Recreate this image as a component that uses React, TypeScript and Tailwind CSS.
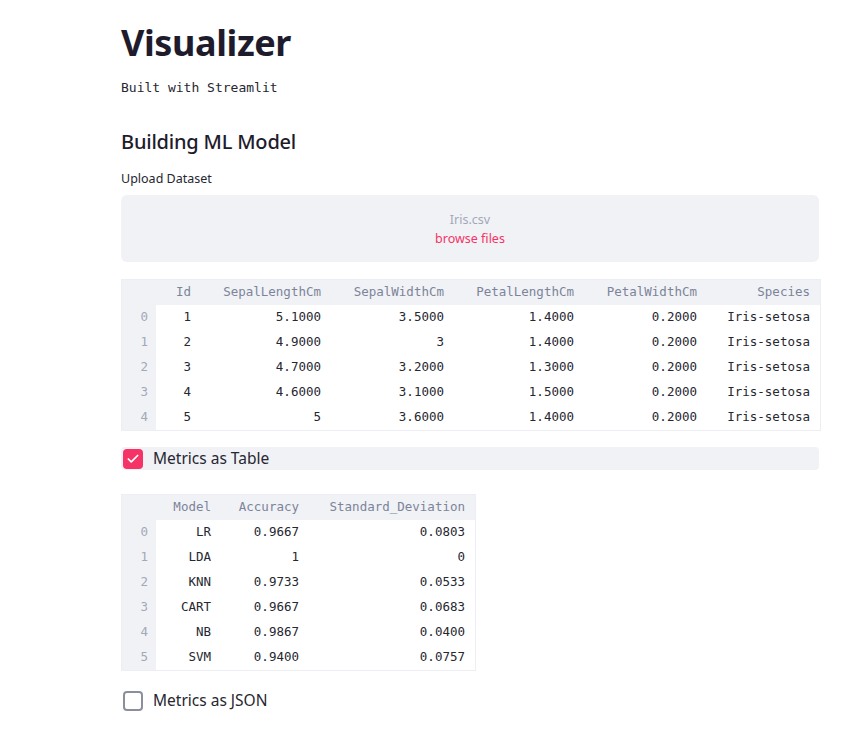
import { Check } from 'lucide-react';

const SANS = { fontFamily: '"Noto Sans", "Open Sans", sans-serif' };
const MONO = { fontFamily: '"DejaVu Sans Mono", "Liberation Mono", monospace' };

type Col = { name: string; width: number };

const IRIS_COLS: Col[] = [
  { name: 'Id', width: 45 },
  { name: 'SepalLengthCm', width: 130 },
  { name: 'SepalWidthCm', width: 123 },
  { name: 'PetalLengthCm', width: 130 },
  { name: 'PetalWidthCm', width: 123 },
  { name: 'Species', width: 113 },
];

const IRIS_ROWS: string[][] = [
  ['1', '5.1000', '3.5000', '1.4000', '0.2000', 'Iris-setosa'],
  ['2', '4.9000', '3', '1.4000', '0.2000', 'Iris-setosa'],
  ['3', '4.7000', '3.2000', '1.3000', '0.2000', 'Iris-setosa'],
  ['4', '4.6000', '3.1000', '1.5000', '0.2000', 'Iris-setosa'],
  ['5', '5', '3.6000', '1.4000', '0.2000', 'Iris-setosa'],
];

const METRIC_COLS: Col[] = [
  { name: 'Model', width: 65 },
  { name: 'Accuracy', width: 88 },
  { name: 'Standard_Deviation', width: 166 },
];

const METRIC_ROWS: string[][] = [
  ['LR', '0.9667', '0.0803'],
  ['LDA', '1', '0'],
  ['KNN', '0.9733', '0.0533'],
  ['CART', '0.9667', '0.0683'],
  ['NB', '0.9867', '0.0400'],
  ['SVM', '0.9400', '0.0757'],
];

function DataFrame({ cols, rows }: { cols: Col[]; rows: string[][] }) {
  const total = 34 + cols.reduce((s, c) => s + c.width, 0);
  return (
    <div className="border border-[#eceef3]" style={{ width: total + 2, ...MONO }}>
      <div className="flex h-[25px] items-center bg-[#f0f2f6] text-[12.5px] text-[#7d8499]">
        <div className="w-[34px] shrink-0" />
        {cols.map((c) => (
          <div key={c.name} className="shrink-0 pr-[10px] text-right" style={{ width: c.width }}>
            {c.name}
          </div>
        ))}
      </div>
      {rows.map((r, i) => (
        <div key={i} className="flex h-[25px] items-center text-[12.5px] text-[#262730]">
          <div className="flex h-full w-[34px] shrink-0 items-center justify-end bg-[#f0f2f6] pr-[8px] text-[#a3a8b8]">
            {i}
          </div>
          {r.map((v, j) => (
            <div key={j} className="shrink-0 pr-[10px] text-right" style={{ width: cols[j].width }}>
              {v}
            </div>
          ))}
        </div>
      ))}
    </div>
  );
}

function Checkbox({ checked, label, shaded }: { checked: boolean; label: string; shaded?: boolean }) {
  return (
    <div className={`flex h-[23px] items-center gap-[10px] rounded-[4px] pl-[2px] ${shaded ? 'bg-[#f0f2f6]' : ''}`}>
      {checked ? (
        <span className="flex h-[20px] w-[20px] items-center justify-center rounded-[4px] bg-[#f63366]">
          <Check className="h-[14px] w-[14px] text-white" strokeWidth={3} />
        </span>
      ) : (
        <span className="h-[20px] w-[20px] rounded-[4px] border-2 border-[#8b8f9c] bg-white" />
      )}
      <span className="text-[15.5px] text-[#262730]">{label}</span>
    </div>
  );
}

export default function App() {
  return (
    <div className="min-h-[742px] bg-white" style={SANS}>
      <div className="ml-[121px] w-[698px] pt-[17px]">
        <h1 className="text-[36px] font-bold leading-[52px] tracking-[-0.4px] text-[#1e1c2c]">Visualizer</h1>
        <p className="mt-[9px] text-[13px] leading-[20px] text-[#262730]" style={MONO}>
          Built with Streamlit
        </p>
        <h2 className="mt-[29px] text-[20px] font-medium leading-[30px] tracking-[-0.2px] text-[#1e1c2c]">
          Building ML Model
        </h2>
        <div className="mt-[14px] text-[12.5px] leading-[16px] text-[#262730]">Upload Dataset</div>

        <div className="mt-[8px] flex h-[67px] flex-col items-center justify-center rounded-[6px] bg-[#f0f2f6]">
          <div className="text-[12.5px] leading-[19px] text-[#a3a8b8]">Iris.csv</div>
          <div className="text-[12.5px] leading-[19px] text-[#f63366]">browse files</div>
        </div>

        <div className="mt-[17px]">
          <DataFrame cols={IRIS_COLS} rows={IRIS_ROWS} />
        </div>

        <div className="mt-[16px]">
          <Checkbox checked label="Metrics as Table" shaded />
        </div>

        <div className="mt-[24px]">
          <DataFrame cols={METRIC_COLS} rows={METRIC_ROWS} />
        </div>

        <div className="mt-[18px]">
          <Checkbox checked={false} label="Metrics as JSON" />
        </div>
      </div>
    </div>
  );
}
